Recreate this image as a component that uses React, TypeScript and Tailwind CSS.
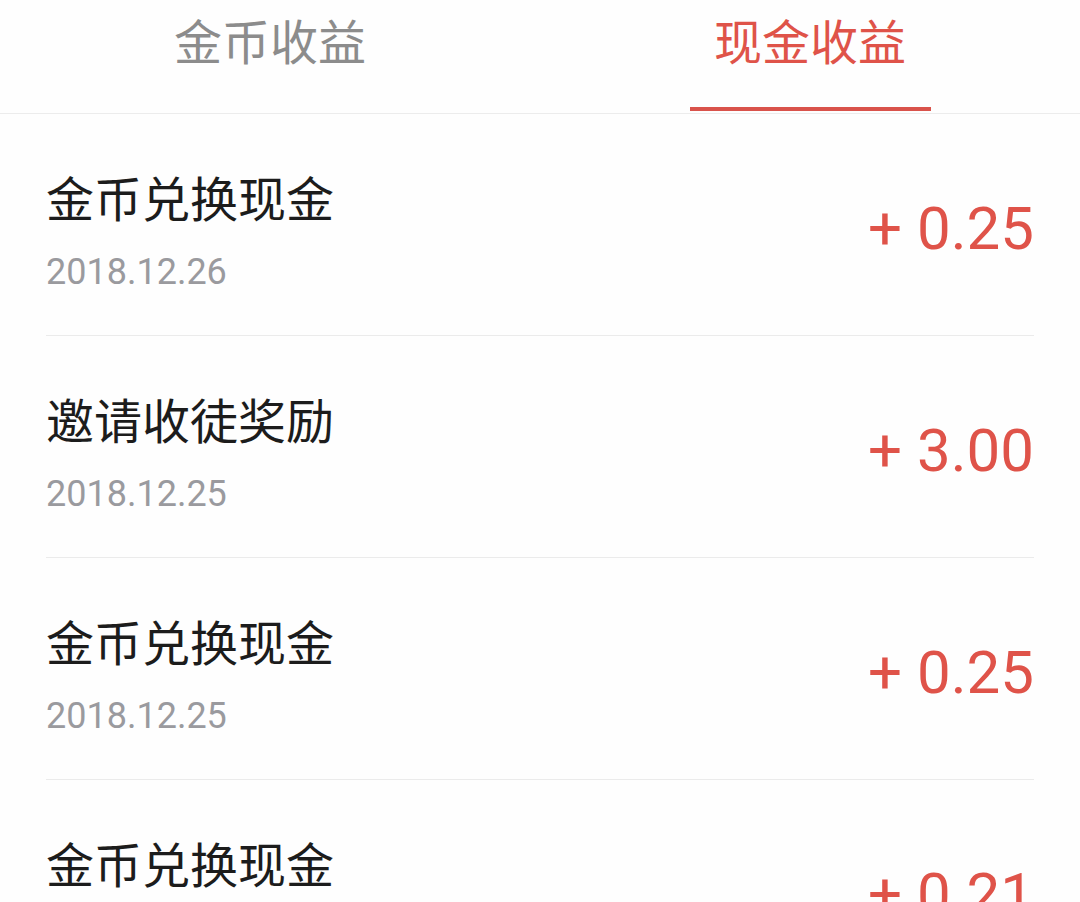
import React from "react";

const rows = [
  { title: "金币兑换现金", date: "2018.12.26", amount: "+ 0.25" },
  { title: "邀请收徒奖励", date: "2018.12.25", amount: "+ 3.00" },
  { title: "金币兑换现金", date: "2018.12.25", amount: "+ 0.25" },
  { title: "金币兑换现金", date: "2018.12.24", amount: "+ 0.21" },
];

const cjk = { fontFamily: '"Noto Sans CJK SC", "Noto Sans", sans-serif' };
const num = { fontFamily: 'Roboto, "Noto Sans", sans-serif' };

export default function App() {
  return (
    <div className="w-[1080px] h-[902px] overflow-hidden bg-[#fefefe]">
      <div className="flex h-[114px] border-b border-[#ececec]">
        <div className="flex-1 flex flex-col items-center">
          <div className="pt-[9px] text-[48px] leading-[60px] text-[#8c8c8c]" style={cjk}>
            金币收益
          </div>
        </div>
        <div className="flex-1 flex flex-col items-center">
          <div className="pt-[9px] text-[48px] leading-[60px] text-[#df5349]" style={cjk}>
            现金收益
          </div>
          <div className="mt-auto mb-[2px] h-[4px] w-[241px] bg-[#d9534b]" />
        </div>
      </div>
      <div className="px-[46px]">
        {rows.map((r, i) => (
          <div key={i} className="flex h-[222px] border-b border-[#ebebeb]">
            <div className="flex-1 pt-[52px]">
              <div className="text-[48px] leading-[60px] text-[#1c1c1c]" style={cjk}>
                {r.title}
              </div>
              <div className="mt-[25px] text-[36px] leading-[42px] text-[#9a9a9e]" style={num}>
                {r.date}
              </div>
            </div>
            <div className="pt-[80px]">
              <div className="text-[60px] leading-[70px] text-[#df5349]" style={num}>
                {r.amount}
              </div>
            </div>
          </div>
        ))}
      </div>
    </div>
  );
}
